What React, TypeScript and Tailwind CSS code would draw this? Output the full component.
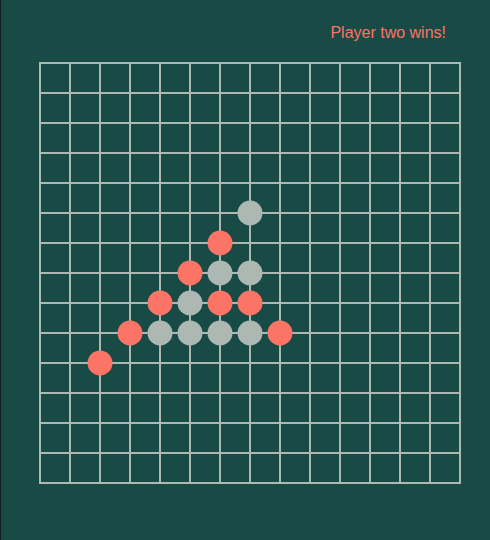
import React from "react";

const RED = "#fb7466";
const GREY = "#adb8b3";

const stones: [number, number, "r" | "g"][] = [
  [7, 5, "g"],
  [6, 6, "r"],
  [5, 7, "r"], [6, 7, "g"], [7, 7, "g"],
  [4, 8, "r"], [5, 8, "g"], [6, 8, "r"], [7, 8, "r"],
  [3, 9, "r"], [4, 9, "g"], [5, 9, "g"], [6, 9, "g"], [7, 9, "g"], [8, 9, "r"],
  [2, 10, "r"],
];

export default function App() {
  const lines = Array.from({ length: 15 }, (_, i) => i);
  return (
    <div className="w-[490px] h-[540px] bg-[#184a46] border-l border-[#0d1f1d] flex flex-col" style={{ fontFamily: '"Liberation Sans", Arial, sans-serif' }}>
      <div className="flex justify-end pr-[44px] pt-6">
        <span className="text-[16px] leading-[18px] text-[#fb7466]">Player two wins!</span>
      </div>
      <svg width="422" height="422" viewBox="0 0 422 422" className="mt-[20px] ml-[38px] block">
        {lines.map((i) => (
          <line key={"v" + i} x1={1 + i * 30} y1={0} x2={1 + i * 30} y2={422} stroke={GREY} strokeWidth={2} />
        ))}
        {lines.map((i) => (
          <line key={"h" + i} x1={0} y1={1 + i * 30} x2={422} y2={1 + i * 30} stroke={GREY} strokeWidth={2} />
        ))}
        {stones.map(([c, r, t], k) => (
          <circle key={k} cx={1 + c * 30} cy={1 + r * 30} r={12.5} fill={t === "r" ? RED : GREY} />
        ))}
      </svg>
    </div>
  );
}
